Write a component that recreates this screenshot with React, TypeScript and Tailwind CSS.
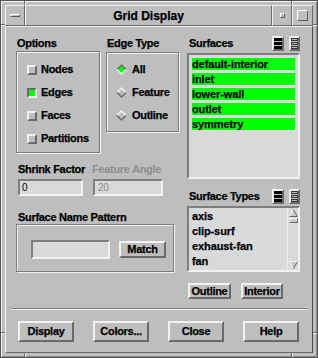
import React from "react";

const raised =
  "border-t-[#f2f2f2] border-l-[#f2f2f2] border-b-[#6a6a6a] border-r-[#6a6a6a]";
const sunken =
  "border-t-[#7e7e7e] border-l-[#7e7e7e] border-b-[#f2f2f2] border-r-[#f2f2f2]";
const etched =
  "border border-[#7e7e7e] shadow-[inset_1px_1px_0_#f2f2f2,1px_1px_0_#f2f2f2]";

function Check({ on }: { on: boolean }) {
  return on ? (
    <span className="block w-[10px] h-[10px] border-2 border-t-[#6a6a6a] border-l-[#6a6a6a] border-b-[#f2f2f2] border-r-[#f2f2f2] bg-[#00ff00] shrink-0" />
  ) : (
    <span className="block w-[10px] h-[10px] border-2 border-t-[#f2f2f2] border-l-[#f2f2f2] border-b-[#6a6a6a] border-r-[#6a6a6a] bg-[#bebebe] shrink-0" />
  );
}

function Diamond({ on }: { on: boolean }) {
  return (
    <svg width="11" height="11" viewBox="0 0 11 11" className="shrink-0">
      <polygon points="0,5.5 5.5,0 11,5.5" fill={on ? "#6a6a6a" : "#f4f4f4"} />
      <polygon points="0,5.5 5.5,11 11,5.5" fill={on ? "#f4f4f4" : "#6a6a6a"} />
      <polygon points="5.5,2 9,5.5 5.5,9 2,5.5" fill={on ? "#00ff00" : "#bebebe"} />
    </svg>
  );
}

function SelIcons() {
  return (
    <div className="flex gap-[5px]">
      <div className={`w-[12px] h-[15px] border-2 ${raised} bg-[#bebebe] flex items-center justify-center`}>
        <svg width="8" height="11" viewBox="0 0 8 11">
          <rect x="0" y="0" width="8" height="3" fill="#000" />
          <rect x="0" y="4" width="8" height="3" fill="#000" />
          <rect x="0" y="8" width="8" height="3" fill="#000" />
        </svg>
      </div>
      <div className={`w-[11px] h-[15px] border-2 ${raised} bg-[#bebebe] flex items-center justify-center`}>
        <svg width="7" height="11" viewBox="0 0 7 11">
          <rect x="0.5" y="0.5" width="6" height="2" fill="#bebebe" stroke="#333" strokeWidth="1" />
          <rect x="0.5" y="4.5" width="6" height="2" fill="#bebebe" stroke="#333" strokeWidth="1" />
          <rect x="0.5" y="8.5" width="6" height="2" fill="#bebebe" stroke="#333" strokeWidth="1" />
        </svg>
      </div>
    </div>
  );
}

function Btn({ label, w, h }: { label: string; w: string; h: string }) {
  return (
    <div
      className={`${w} ${h} border-2 ${raised} bg-[#bebebe] flex items-center justify-center text-[11px] font-bold tracking-[-0.3px] leading-none`}
    >
      {label}
    </div>
  );
}

export default function App() {
  const surfaces = ["default-interior", "inlet", "lower-wall", "outlet", "symmetry"];
  const types = ["axis", "clip-surf", "exhaust-fan", "fan"];
  return (
    <div className="relative w-[318px] h-[358px] bg-[#bebebe] border border-[#555555] p-[4px] flex flex-col font-['Liberation_Sans',Arial,sans-serif] text-black shadow-[inset_1px_1px_0_#f2f2f2,inset_-1px_-1px_0_#8a8a8a]">
      {/* frame corner ticks */}
      <div className="absolute left-[23px] top-0 w-[2px] h-[4px] border-l border-l-[#6a6a6a] border-r border-r-[#f2f2f2]" />
      <div className="absolute left-[290px] top-0 w-[2px] h-[4px] border-l border-l-[#6a6a6a] border-r border-r-[#f2f2f2]" />
      <div className="absolute left-[23px] bottom-0 w-[2px] h-[4px] border-l border-l-[#6a6a6a] border-r border-r-[#f2f2f2]" />
      <div className="absolute left-[290px] bottom-0 w-[2px] h-[4px] border-l border-l-[#6a6a6a] border-r border-r-[#f2f2f2]" />
      <div className="absolute left-0 top-[23px] w-[4px] h-[2px] border-t border-t-[#6a6a6a] border-b border-b-[#f2f2f2]" />
      <div className="absolute right-0 top-[23px] w-[4px] h-[2px] border-t border-t-[#6a6a6a] border-b border-b-[#f2f2f2]" />
      <div className="absolute left-0 top-[331px] w-[4px] h-[2px] border-t border-t-[#6a6a6a] border-b border-b-[#f2f2f2]" />
      <div className="absolute right-0 top-[331px] w-[4px] h-[2px] border-t border-t-[#6a6a6a] border-b border-b-[#f2f2f2]" />

      {/* title bar */}
      <div className="h-[21px] flex shrink-0">
        <div className={`w-[20px] h-full border ${raised} flex items-center justify-center`}>
          <div className="w-[10px] h-[3px] border border-t-white border-l-white border-b-[#5a5a5a] border-r-[#5a5a5a]" />
        </div>
        <div className={`flex-1 h-full border ${raised} flex items-center justify-center text-[12px] font-bold [-webkit-text-stroke:0.25px_#000]`}>
          Grid Display
        </div>
        <div className={`w-[20px] h-full border ${raised} flex items-center justify-center`}>
          <div className="w-[5px] h-[5px] border border-t-white border-l-white border-b-[#5a5a5a] border-r-[#5a5a5a]" />
        </div>
        <div className={`w-[21px] h-full border ${raised} flex items-center justify-center`}>
          <div className="w-[11px] h-[11px] border border-t-white border-l-white border-b-[#5a5a5a] border-r-[#5a5a5a]" />
        </div>
      </div>

      {/* content */}
      <div className="flex-1 border border-t-[#f2f2f2] border-l-[#f2f2f2] border-b-[#6a6a6a] border-r-[#4a4a4a] flex flex-col pl-[10px] pt-[9px] text-[11px] font-bold tracking-[-0.3px] [-webkit-text-stroke:0.25px_#000]">
        <div className="flex gap-[7px]">
          {/* left column */}
          <div className="w-[164px] flex flex-col">
            <div className="flex gap-[6px]">
              <div className="w-[84px] flex flex-col">
                <div className="h-[15px] leading-[14px] pl-[1px]">Options</div>
                <div className={`h-[102px] ${etched} pl-[10px] pt-[6px] flex flex-col`}>
                  {[
                    ["Nodes", false],
                    ["Edges", true],
                    ["Faces", false],
                    ["Partitions", false],
                  ].map(([l, on]) => (
                    <div key={l as string} className="h-[23px] flex items-center gap-[4px]">
                      <Check on={on as boolean} />
                      <span>{l as string}</span>
                    </div>
                  ))}
                </div>
              </div>
              <div className="w-[73px] flex flex-col">
                <div className="h-[16px] leading-[14px] pl-[1px]">Edge Type</div>
                <div className={`h-[80px] ${etched} pl-[9px] pt-[5px] flex flex-col`}>
                  {[
                    ["All", true],
                    ["Feature", false],
                    ["Outline", false],
                  ].map(([l, on]) => (
                    <div key={l as string} className="h-[23px] flex items-center gap-[5px]">
                      <Diamond on={on as boolean} />
                      <span>{l as string}</span>
                    </div>
                  ))}
                </div>
              </div>
            </div>

            <div className="mt-[9px] h-[14px] leading-[14px] flex">
              <div className="w-[76px] pl-[2px]">Shrink Factor</div>
              <div className="text-[#8c8c8c] [-webkit-text-stroke:0px_#8c8c8c]">Feature Angle</div>
            </div>
            <div className="mt-[3px] flex">
              <div className={`ml-[2px] w-[65px] h-[17px] border-2 ${sunken} bg-[#d9d9d9] text-[10px] font-normal leading-[13px] pl-[2px] [-webkit-text-stroke:0px_#000]`}>
                0
              </div>
              <div className={`ml-[10px] w-[70px] h-[17px] border-2 ${sunken} bg-[#d9d9d9] text-[10px] font-normal leading-[13px] pl-[3px] text-[#8c8c8c] [-webkit-text-stroke:0px_#000]`}>
                20
              </div>
            </div>

            <div className="mt-[15px] h-[13px] leading-[13px] pl-[2px]">Surface Name Pattern</div>
            <div className={`w-[158px] h-[48px] ${etched} pt-[15px] pl-[14px]`}>
              <div className="flex items-center gap-[9px]">
                <div className={`w-[79px] h-[19px] border-2 ${sunken} bg-[#d9d9d9]`} />
                <Btn label="Match" w="w-[47px]" h="h-[17px]" />
              </div>
            </div>
          </div>

          {/* right column */}
          <div className="w-[113px] flex flex-col">
            <div className="h-[17px] flex items-start justify-between">
              <div className="pl-[2px] leading-[14px]">Surfaces</div>
              <SelIcons />
            </div>
            <div className={`h-[126px] border-2 ${sunken} bg-[#d9d9d9] px-[3px] pt-[3px] flex flex-col gap-[3px] tracking-[-0.1px]`}>
              {surfaces.map((s) => (
                <div key={s} className="h-[12px] leading-[12px] bg-[#00ff00]">
                  {s}
                </div>
              ))}
            </div>

            <div className="mt-[10px] h-[17px] flex items-start justify-between">
              <div className="pl-[2px] leading-[14px]">Surface Types</div>
              <SelIcons />
            </div>
            <div className={`h-[66px] border-2 ${sunken} bg-[#d9d9d9] flex`}>
              <div className="flex-1 pl-[3px] pt-[1px] flex flex-col tracking-[-0.1px]">
                {types.map((t) => (
                  <div key={t} className="h-[15px] leading-[15px]">
                    {t}
                  </div>
                ))}
              </div>
              <div className="w-[11px] flex flex-col items-center justify-between border-l border-l-[#ececec] pt-[1px] pb-[1px]">
                <div className="flex flex-col items-center">
                  <svg width="9" height="8" viewBox="0 0 9 8">
                    <polygon points="4.5,0.5 8.5,7.5 0.5,7.5" fill="#c8c8c8" />
                    <line x1="4.5" y1="0.5" x2="0.5" y2="7.5" stroke="#f4f4f4" strokeWidth="1" />
                    <line x1="4.5" y1="0.5" x2="8.5" y2="7.5" stroke="#6a6a6a" strokeWidth="1" />
                    <line x1="0.5" y1="7.5" x2="8.5" y2="7.5" stroke="#6a6a6a" strokeWidth="1" />
                  </svg>
                  <div className="mt-[1px] w-[9px] h-[5px] border border-t-[#f4f4f4] border-l-[#f4f4f4] border-b-[#6a6a6a] border-r-[#6a6a6a] bg-[#c8c8c8]" />
                </div>
                <svg width="9" height="8" viewBox="0 0 9 8">
                  <polygon points="0.5,0.5 8.5,0.5 4.5,7.5" fill="#c8c8c8" />
                  <line x1="0.5" y1="0.5" x2="8.5" y2="0.5" stroke="#f4f4f4" strokeWidth="1" />
                  <line x1="0.5" y1="0.5" x2="4.5" y2="7.5" stroke="#f4f4f4" strokeWidth="1" />
                  <line x1="8.5" y1="0.5" x2="4.5" y2="7.5" stroke="#6a6a6a" strokeWidth="1" />
                </svg>
              </div>
            </div>
            <div className="mt-[11px] flex gap-[10px] pl-[1px]">
              <Btn label="Outline" w="w-[43px]" h="h-[16px]" />
              <Btn label="Interior" w="w-[42px]" h="h-[16px]" />
            </div>
          </div>
        </div>

        <div className="mt-[9px] -ml-[5px] w-[296px] h-[2px] border-t border-t-[#7e7e7e] border-b border-b-[#f2f2f2]" />

        <div className="mt-[11px] ml-[2px] flex gap-[19px]">
          <Btn label="Display" w="w-[56px]" h="h-[21px]" />
          <Btn label="Colors..." w="w-[56px]" h="h-[21px]" />
          <Btn label="Close" w="w-[56px]" h="h-[21px]" />
          <Btn label="Help" w="w-[56px]" h="h-[21px]" />
        </div>
      </div>
    </div>
  );
}
